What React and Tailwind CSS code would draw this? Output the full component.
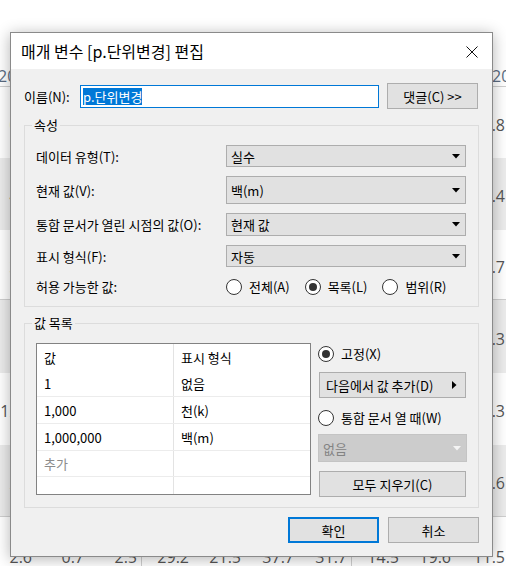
import React from "react";

const cols =
  "grid h-full grid-cols-[36px_52px_53px_52px_52px_53px_53px_52px_52px_51px]";

// rows of the sheet behind the dialog
const sheetRows = [
  { h: "h-[71px]", bg: "bg-white", line: false, first: "0.4", last: "11.8" },
  { h: "h-[72px]", bg: "bg-[#ececec]", line: false, first: "4.1", last: "16.4" },
  { h: "h-[70px]", bg: "bg-white", line: true, first: "3.2", last: "8.7" },
  { h: "h-[73px]", bg: "bg-[#ececec]", line: false, first: "1.9", last: "12.3" },
  { h: "h-[72px]", bg: "bg-white", line: false, first: "12.5", last: "10.3" },
  { h: "h-[72px]", bg: "bg-[#ececec]", line: true, first: "2.2", last: "14.6" },
];

const bottomNums = ["2.6", "0.7", "2.5", "29.2", "21.5", "37.7", "31.7", "14.5", "19.6", "11.5"];

const Cell = ({ children, i }) => (
  <div
    className={
      "flex items-center justify-end pt-[4px] " +
      (i === 9 ? "pr-[1px] " : "pr-[4px] ") +
      (i === 3 || i === 7 ? "border-l border-[#cfcfcf]" : "")
    }
  >
    {children}
  </div>
);

const Sheet = () => {
  return (
    <div className="flex flex-col font-['Open_Sans','Noto_Sans',sans-serif] text-[16px] text-[#555]">
      <div className="h-[60px] bg-white"></div>
      <div className="flex h-[27px] items-end justify-between border-b border-[#cfcfcf] pb-[1px] text-[#5b6b80]">
        <span className="-ml-[2px] leading-[18px]">2020</span>
        <span className="w-[14px] overflow-hidden whitespace-nowrap leading-[18px]">2020</span>
      </div>
      {sheetRows.map((r, idx) => (
        <div
          key={idx}
          className={r.h + " " + r.bg + " " + (r.line ? "border-b border-[#cfcfcf]" : "")}
        >
          <div className={cols}>
            {Array.from({ length: 10 }).map((_, i) => (
              <Cell key={i} i={i}>
                {i === 0 ? r.first : i === 9 ? r.last : ""}
              </Cell>
            ))}
          </div>
        </div>
      ))}
      <div className="h-[76px] bg-white">
        <div className={cols}>
          {bottomNums.map((n, i) => (
            <Cell key={i} i={i}>
              {n}
            </Cell>
          ))}
        </div>
      </div>
    </div>
  );
};

const Caret = ({ color = "#000" }) => (
  <svg width="8" height="5" viewBox="0 0 8 5">
    <path d="M0 0 L8 0 L4 4.5 Z" fill={color} />
  </svg>
);

const Select = ({ value, h, disabled }) => (
  <div
    className={
      "flex items-center justify-between pl-[4px] pr-[5px] " +
      h +
      " " +
      (disabled
        ? "border border-[#c4c4c4] bg-[#cccccc] text-[#838383]"
        : "border border-[#adadad] bg-[#e1e1e1]")
    }
  >
    <span>{value}</span>
    <Caret color={disabled ? "#f4f4f4" : "#000"} />
  </div>
);

const Radio = ({ checked, label }) => (
  <div className="flex items-center gap-[7px]">
    <span className="flex h-[16px] w-[16px] items-center justify-center rounded-full border border-[#333] bg-white">
      {checked && <span className="h-[8px] w-[8px] rounded-full bg-[#333]"></span>}
    </span>
    <span>{label}</span>
  </div>
);

const Button = ({ children, className = "" }) => (
  <button
    className={
      "flex h-[26px] items-center justify-center border border-[#adadad] bg-[#e1e1e1] " + className
    }
  >
    {children}
  </button>
);

const Group = ({ title, children, className = "" }) => (
  <fieldset className={"border border-[#dcdcdc] px-[11px] " + className}>
    <legend className="-ml-[4px] px-[2px] leading-[16px]">{title}</legend>
    {children}
  </fieldset>
);

const tableRows = [
  ["1", "없음"],
  ["1,000", "천(k)"],
  ["1,000,000", "백(m)"],
];

const App = () => {
  return (
    <div className="relative h-[566px] w-[506px] overflow-hidden bg-white">
      <Sheet />

      {/* dialog */}
      <div className="absolute left-[10px] top-[32px] flex h-[525px] w-[483px] flex-col border border-[#8a8a8a] bg-[#f0f0f0] font-['Noto_Sans_CJK_KR','Noto_Sans',sans-serif] text-[13px] leading-[17px] text-black shadow-[0_2px_14px_rgba(0,0,0,0.3)]">
        <div className="flex h-[36px] shrink-0 items-center justify-between bg-white pl-[10px] pr-[14px]">
          <span className="text-[16px]">매개 변수 [p.단위변경] 편집</span>
          <svg width="12" height="12" viewBox="0 0 12 12" className="mt-[1px]">
            <path d="M0.5 0.5 L11.5 11.5 M11.5 0.5 L0.5 11.5" stroke="#111" strokeWidth="1" />
          </svg>
        </div>

        <div className="flex flex-1 flex-col px-[13px] pt-[14px] pb-[13px]">
          {/* name */}
          <div className="flex h-[26px] items-center">
            <span className="w-[56px]">이름(N):</span>
            <div className="flex h-[23px] w-[299px] items-center border border-[#0078d7] bg-white pl-[2px]">
              <span className="bg-[#0078d7] text-white">p.단위변경</span>
            </div>
            <Button className="ml-[8px] w-[91px]">댓글(C) &gt;&gt;</Button>
          </div>

          {/* properties */}
          <Group title="속성" className="mt-[8px] pb-[11px]">
            <div className="mt-[12px] grid grid-cols-[190px_240px] items-center gap-y-[9px]">
              <span>데이터 유형(T):</span>
              <Select value="실수" h="h-[22px]" />
              <span>현재 값(V):</span>
              <Select value="백(m)" h="h-[28px]" />
              <span className="whitespace-nowrap">통합 문서가 열린 시점의 값(O):</span>
              <Select value="현재 값" h="h-[23px]" />
              <span>표시 형식(F):</span>
              <Select value="자동" h="h-[22px]" />
              <span className="mt-[2px]">허용 가능한 값:</span>
              <div className="mt-[2px] flex items-center gap-[15px]">
                <Radio label="전체(A)" />
                <Radio label="목록(L)" checked />
                <Radio label="범위(R)" />
              </div>
            </div>
          </Group>

          {/* value list */}
          <Group title="값 목록" className="mt-[8px] pb-[10px]">
            <div className="mt-[12px] flex">
              <div className="flex h-[152px] w-[275px] flex-col overflow-hidden border border-[#828282] bg-white">
                <div className="grid h-[26px] shrink-0 grid-cols-[136px_1fr] items-center">
                  <span className="pl-[7px]">값</span>
                  <span className="flex h-full items-center border-l border-[#e3e3e3] pl-[7px]">표시 형식</span>
                </div>
                {tableRows.map((r, i) => (
                  <div
                    key={i}
                    className="grid h-[27px] shrink-0 grid-cols-[136px_1fr] border-b border-[#ececec]"
                  >
                    <span className="flex items-center pl-[7px]">{r[0]}</span>
                    <span className="flex items-center border-l border-[#e3e3e3] pl-[7px]">{r[1]}</span>
                  </div>
                ))}
                <div className="grid h-[26px] shrink-0 grid-cols-[136px_1fr] border-b border-[#ececec]">
                  <span className="flex items-center pl-[7px] text-[#8c8c8c]">추가</span>
                  <span className="border-l border-[#e3e3e3]"></span>
                </div>
                <div className="grid flex-1 grid-cols-[136px_1fr]">
                  <span></span>
                  <span className="border-l border-[#e3e3e3]"></span>
                </div>
              </div>

              <div className="ml-[7px] flex w-[149px] flex-col">
                <div className="mt-[2px]">
                  <Radio label="고정(X)" checked />
                </div>
                <Button className="mt-[10px] ml-[1px] w-[147px] !justify-between pl-[6px] pr-[8px]">
                  <span>다음에서 값 추가(D)</span>
                  <svg width="5" height="8" viewBox="0 0 5 8">
                    <path d="M0 0 L4.5 4 L0 8 Z" fill="#000" />
                  </svg>
                </Button>
                <div className="mt-[11px]">
                  <Radio label="통합 문서 열 때(W)" />
                </div>
                <div className="mt-[8px]">
                  <Select value="없음" h="h-[28px]" disabled />
                </div>
                <Button className="mt-[9px] ml-[1px] w-[147px]">모두 지우기(C)</Button>
              </div>
            </div>
          </Group>

          {/* footer */}
          <div className="mt-auto flex justify-end gap-[9px]">
            <button className="flex h-[26px] w-[91px] items-center justify-center border-2 border-[#0078d7] bg-[#e1e1e1]">
              확인
            </button>
            <Button className="w-[91px]">취소</Button>
          </div>
        </div>
      </div>
    </div>
  );
};

export default App;
